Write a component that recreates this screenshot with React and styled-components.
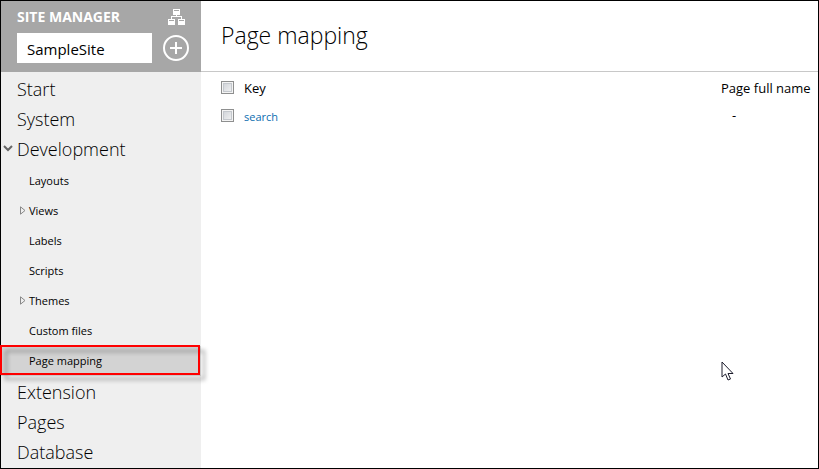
import React from "react";
import styled, { createGlobalStyle } from "styled-components";

const GlobalStyle = createGlobalStyle`
  *, *::before, *::after { box-sizing: border-box; }
  body {
    margin: 0;
    background: #fff;
    color: #000;
    font-family: "Open Sans", "Noto Sans", sans-serif;
  }
`;

const Page = styled.div`
  position: relative;
  display: grid;
  grid-template-columns: 200px minmax(0, 1fr);
  min-height: 100vh;
  border: 1px solid #000;
`;

const Sidebar = styled.aside`
  background: #efefef;
`;

const SiteHeader = styled.header`
  display: grid;
  grid-template-columns: 1fr 26px;
  grid-template-rows: 32px 30px;
  column-gap: 11px;
  height: 71px;
  padding: 0 12px 0 16px;
  background: #a7a7a7;
`;

const Caption = styled.h2`
  margin: 0;
  color: #fff;
  font-size: 14px;
  font-weight: 700;
  line-height: 32px;
  white-space: nowrap;
`;

const SiteInput = styled.input`
  width: 100%;
  height: 30px;
  padding: 2px 10px 0;
  border: 0;
  border-radius: 0;
  background: #fff;
  color: #000;
  font-family: inherit;
  font-size: 15px;
`;

const IconButton = styled.button`
  display: flex;
  align-items: center;
  justify-content: center;
  padding: 0;
  border: 0;
  background: transparent;
`;

const NavList = styled.ul`
  margin: 0;
  padding: 2px 0 0;
  list-style: none;
`;

const SubList = styled.ul`
  margin: 0;
  padding: 2px 0 1px;
  list-style: none;
`;

const NavItem = styled.li`
  position: relative;
`;

const NavLink = styled.a`
  display: flex;
  align-items: center;
  height: 30px;
  padding-left: 2px;
  color: #000;
  font-size: 18px;
  font-weight: 300;
  text-decoration: none;
`;

const SubLink = styled(NavLink)`
  padding: 0 0 2px 18px;
  background: ${(p) => (p.$current ? "#d3d3d3" : "transparent")};
  font-size: 11px;
  font-weight: 400;
`;

const Marker = styled.span`
  display: flex;
  flex: none;
  align-items: center;
  width: ${(p) => (p.$sub ? "10px" : "14px")};
`;

const Highlight = styled.span`
  position: absolute;
  inset: -1px 1px 1px -1px;
  border: 2px solid #f00;
  filter: drop-shadow(5px 5px 2px rgba(0, 0, 0, 0.35));
  pointer-events: none;
`;

const Main = styled.main`
  min-width: 0;
`;

const TitleBar = styled.header`
  display: flex;
  align-items: center;
  height: 71px;
  padding: 0 20px 2px;
  border-bottom: 1px solid #c8c8c8;
`;

const Title = styled.h1`
  margin: 0;
  font-size: 23px;
  font-weight: 300;
  line-height: 32px;
`;

const Table = styled.table`
  width: 100%;
  margin-top: 2px;
  border-collapse: collapse;
  table-layout: fixed;
  text-align: left;
`;

const CheckCell = styled.td`
  width: 43px;
  height: 28px;
  padding: 0 0 2px 20px;
  vertical-align: middle;
`;

const HeadCell = styled.th`
  width: ${(p) => p.$width || "auto"};
  padding: 0;
  font-size: 13px;
  font-weight: 400;
  white-space: nowrap;
`;

const Cell = styled.td`
  padding: ${(p) => (p.$inset ? "0 0 2px 11px" : "0")};
  font-size: 13px;
`;

const KeyLink = styled.a`
  color: #0b6db0;
  font-size: 11px;
  text-decoration: none;
`;

const Checkbox = styled.input`
  display: block;
  width: 13px;
  height: 13px;
  margin: 0;
  appearance: none;
  border: 1px solid #8e8f8f;
  background: linear-gradient(135deg, #cbcfd5, #f6f6f6);
  box-shadow: inset 0 0 0 1px #f4f4f4, inset 0 0 0 2px #c4c8cd;
`;

const Pointer = styled.svg`
  position: absolute;
  top: 360px;
  right: 84px;
  pointer-events: none;
`;

function SitemapIcon() {
  return (
    <svg width="18" height="16" viewBox="0 0 18 16" shapeRendering="crispEdges" aria-hidden="true">
      <path
        fill="#fff"
        fillRule="evenodd"
        d="M6 0h7v6H6zM7 1v1h5V1zM9 6h1v1h5v3h-1V8H5v2H4V7h5zM1 10h7v6H1zM2 11v1h5v-1zM11 10h7v6h-7zM12 11v1h5v-1z"
      />
    </svg>
  );
}

function AddIcon() {
  return (
    <svg width="26" height="26" viewBox="0 0 26 26" fill="none" stroke="#fff" aria-hidden="true">
      <circle cx="13" cy="13" r="12" strokeWidth="2" />
      <path d="M7 13h12M13 7v12" strokeWidth="2" />
    </svg>
  );
}

function ChevronIcon() {
  return (
    <svg width="10" height="8" viewBox="0 0 10 8" fill="none" aria-hidden="true">
      <path d="M1 1l4 4 4-4" stroke="#666" strokeWidth="2" />
    </svg>
  );
}

function TriangleIcon() {
  return (
    <svg width="7" height="9" viewBox="0 0 7 9" fill="none" aria-hidden="true">
      <path d="M1.500 .8v7.400L6 4.500z" stroke="#888" />
    </svg>
  );
}

const sections = [
  { label: "Start" },
  { label: "System" },
  {
    label: "Development",
    children: [
      { label: "Layouts" },
      { label: "Views", expandable: true },
      { label: "Labels" },
      { label: "Scripts" },
      { label: "Themes", expandable: true },
      { label: "Custom files" },
      { label: "Page mapping", current: true },
    ],
  },
  { label: "Extension" },
  { label: "Pages" },
  { label: "Database" },
];

function Section({ label, children }) {
  return (
    <li>
      <NavLink href="#">
        <Marker>{children && <ChevronIcon />}</Marker>
        {label}
      </NavLink>
      {children && (
        <SubList>
          {children.map((item) => (
            <NavItem key={item.label}>
              <SubLink href="#" $current={item.current}>
                <Marker $sub>{item.expandable && <TriangleIcon />}</Marker>
                {item.label}
              </SubLink>
              {item.current && <Highlight />}
            </NavItem>
          ))}
        </SubList>
      )}
    </li>
  );
}

export default function App() {
  return (
    <Page>
      <GlobalStyle />
      <Sidebar>
        <SiteHeader>
          <Caption>SITE MANAGER</Caption>
          <IconButton type="button" aria-label="Site map">
            <SitemapIcon />
          </IconButton>
          <SiteInput aria-label="Site" defaultValue="SampleSite" />
          <IconButton type="button" aria-label="Add site">
            <AddIcon />
          </IconButton>
        </SiteHeader>
        <nav>
          <NavList>
            {sections.map((s) => (
              <Section key={s.label} label={s.label}>
                {s.children}
              </Section>
            ))}
          </NavList>
        </nav>
      </Sidebar>
      <Main>
        <TitleBar>
          <Title>Page mapping</Title>
        </TitleBar>
        <Table>
          <thead>
            <tr>
              <CheckCell>
                <Checkbox type="checkbox" aria-label="Select all" />
              </CheckCell>
              <HeadCell scope="col">Key</HeadCell>
              <HeadCell scope="col" $width="97px">
                Page full name
              </HeadCell>
            </tr>
          </thead>
          <tbody>
            <tr>
              <CheckCell>
                <Checkbox type="checkbox" aria-label="Select search" />
              </CheckCell>
              <Cell>
                <KeyLink href="#">search</KeyLink>
              </Cell>
              <Cell $inset>-</Cell>
            </tr>
          </tbody>
        </Table>
      </Main>
      <Pointer width="13" height="20" viewBox="0 0 13 20" aria-hidden="true">
        <path
          d="M1 1v15l3.500-3 2.500 6 2.500-1-2.500-5.500H12z"
          fill="#fff"
          stroke="#1c1c2c"
        />
      </Pointer>
    </Page>
  );
}
